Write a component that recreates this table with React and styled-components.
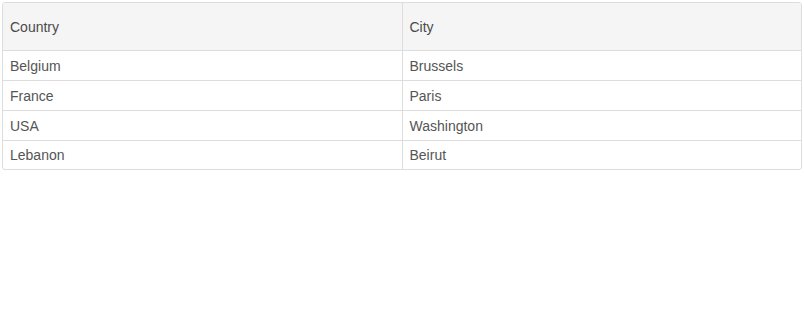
import React from "react";
import styled, { createGlobalStyle } from "styled-components";

const Global = createGlobalStyle`
  html, body { margin: 0; padding: 0; background: #fff; }
  body { font-family: "Liberation Sans", Arial, sans-serif; }
`;

const Page = styled.div`
  padding: 2px;
  width: 800px;
`;

const Frame = styled.div`
  border: 1px solid #dddddd;
  border-radius: 3px;
  overflow: hidden;
  box-sizing: border-box;
  width: 800px;
`;

const Table = styled.table`
  width: 100%;
  border-collapse: collapse;
  table-layout: fixed;
  font-size: 14px;
  color: #555;
`;

const HeadCell = styled.th`
  background: #f5f5f5;
  height: 47px;
  padding: 0 7px;
  text-align: left;
  font-weight: normal;
  color: #4a4a4a;
  border-bottom: 1px solid #dddddd;
  & + & { border-left: 1px solid #dddddd; }
`;

const Cell = styled.td`
  height: 29px;
  padding: 0 7px;
  border-top: 1px solid #dddddd;
  & + & { border-left: 1px solid #dddddd; }
`;

const Row = styled.tr`
  &:first-child > td { border-top: none; }
  &:last-child > td { height: 28px; }
`;

const data = [
  ["Belgium", "Brussels"],
  ["France", "Paris"],
  ["USA", "Washington"],
  ["Lebanon", "Beirut"],
];

export default function App() {
  return (
    <Page>
      <Global />
      <Frame>
        <Table>
          <thead>
            <tr>
              <HeadCell>Country</HeadCell>
              <HeadCell>City</HeadCell>
            </tr>
          </thead>
          <tbody>
            {data.map(([c, city]) => (
              <Row key={c}>
                <Cell>{c}</Cell>
                <Cell>{city}</Cell>
              </Row>
            ))}
          </tbody>
        </Table>
      </Frame>
    </Page>
  );
}
